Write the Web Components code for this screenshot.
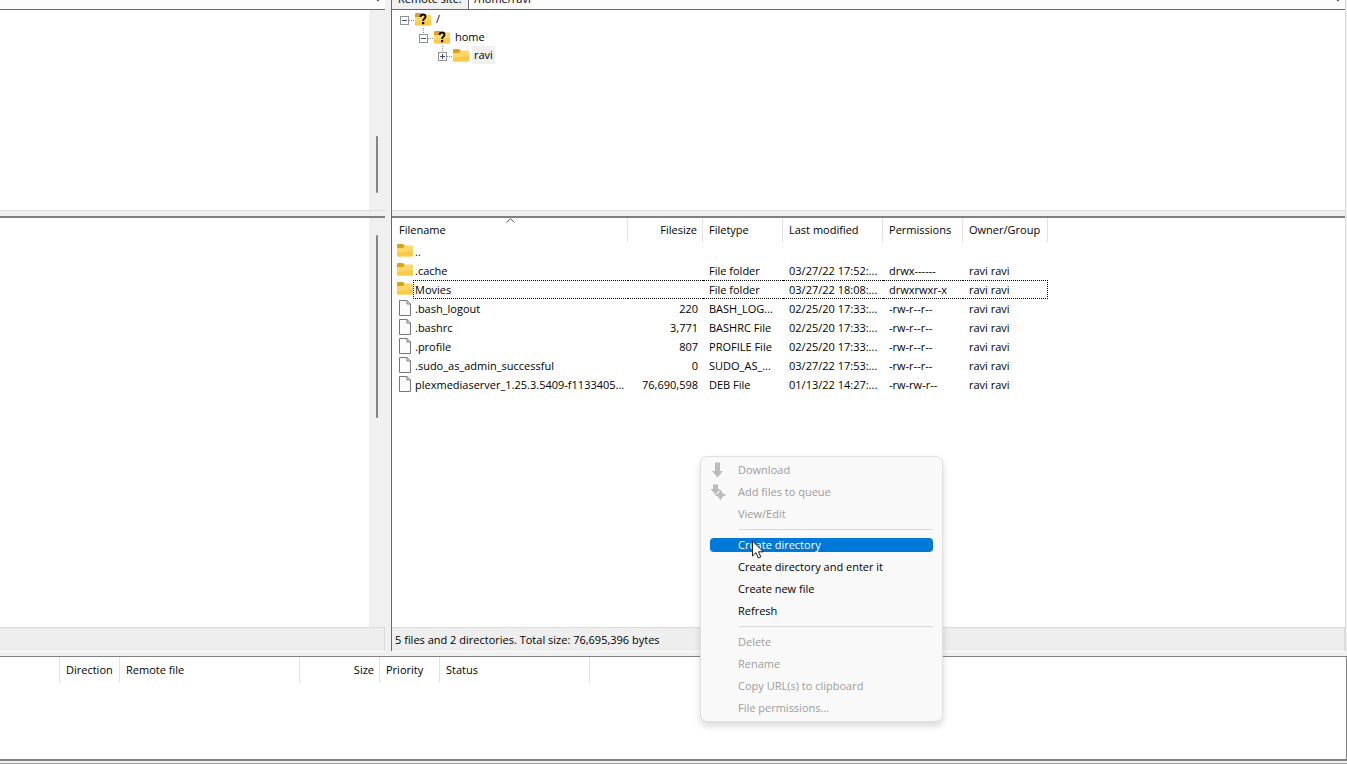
<!DOCTYPE html>
<html lang="en">
<head>
<meta charset="utf-8">
<title>File transfer</title>
<style>
    html, body { height: 100%; }
    body {
        margin: 0;
        overflow: hidden;
        background: #f0f0f0;
        color: #000;
        font: 11px/16px "Open Sans", "Noto Sans", sans-serif;
    }
</style>
</head>
<body>
<ftp-window>
    <site-bar slot="local-bar"></site-bar>
    <scroll-pane slot="local-tree" start="126" size="57"></scroll-pane>
    <scroll-pane slot="local-list" start="17" size="183"></scroll-pane>
    <status-line slot="local-status"></status-line>

    <site-bar slot="remote-bar" caption="Remote site:" path="/home/ravi"></site-bar>
    <div slot="remote-tree">
        <tree-item level="0" icon="unknown" state="open">/</tree-item>
        <tree-item level="1" icon="unknown" state="open">home</tree-item>
        <tree-item level="2" icon="folder" state="closed" selected>ravi</tree-item>
    </div>
    <file-list slot="remote-list"></file-list>
    <status-line slot="remote-status">5 files and 2 directories. Total size: 76,695,396 bytes</status-line>

    <transfer-queue slot="queue"></transfer-queue>
</ftp-window>

<context-menu>
    <menu-item icon="download" disabled>Download</menu-item>
    <menu-item icon="queue" disabled>Add files to queue</menu-item>
    <menu-item disabled>View/Edit</menu-item>
    <menu-line></menu-line>
    <menu-item active>Create directory</menu-item>
    <menu-item>Create directory and enter it</menu-item>
    <menu-item>Create new file</menu-item>
    <menu-item>Refresh</menu-item>
    <menu-line></menu-line>
    <menu-item disabled>Delete</menu-item>
    <menu-item disabled>Rename</menu-item>
    <menu-item disabled>Copy URL(s) to clipboard</menu-item>
    <menu-item disabled>File permissions...</menu-item>
</context-menu>
<mouse-pointer></mouse-pointer>

<script>
const folder = `
    <svg width="16" height="14" viewBox="0 0 16 14">
        <path d="M0 2Q0 1 1 1H6L8 3V6H0Z" fill="#dba21c"/>
        <path d="M0 5H6L8 2.500H15Q16 2.500 16 3.500V12.500Q16 13.500 15 13.500H1Q0 13.500 0 12.500Z" fill="#fdd767"/>
        <path d="M0 10L16 8V12.500Q16 13.500 15 13.500H1Q0 13.500 0 12.500Z" fill="#f9c948"/>
    </svg>`

const unknownFolder = folder.replace('</svg>', `
        <path d="M5.500 5Q5.500 2.500 8 2.500Q10.500 2.500 10.500 4.600Q10.500 6 9.200 6.800Q8.200 7.500 8.200 9" fill="none" stroke="#000" stroke-width="1.800"/>
        <rect x="7" y="10" width="2.200" height="2.200" fill="#000"/>
    </svg>`)

const page = `
    <svg width="12" height="16" viewBox="0 0 12 16">
        <path d="M.5.5H8L11.500 4V15.500H.5Z" fill="#fcfcfc" stroke="#777"/>
        <path d="M8 .5V4H11.500" fill="none" stroke="#777"/>
    </svg>`

const menuIcons = {
    download: `
        <svg width="16" height="16" viewBox="0 0 16 16">
            <path d="M5 .5H10V9H13L7.500 15.500L2 9H5Z" fill="#bcbcbc"/>
        </svg>`,
    queue: `
        <svg width="16" height="16" viewBox="0 0 16 16">
            <path d="M3 .5H8V5H10.500L5.500 10.500L.3 5H3Z" fill="#bcbcbc"/>
            <path d="M10.500 6L12 9.500L15.500 11L12 12.500L10.500 16L9 12.500L5.500 11L9 9.500Z" fill="#bcbcbc" stroke="#bcbcbc"/>
        </svg>`
}

class FtpWindow extends HTMLElement {
    constructor(){
        super();
        this.shadowdom = this.attachShadow({mode:'open'})
    }
    connectedCallback(){
        this.shadowdom.innerHTML = `
        <style>
        :host {
            display: flex;
            flex-direction: column;
            height: 100vh;
        }
        .sites {
            flex: 1;
            min-height: 0;
            display: grid;
            grid-template-columns: 385px minmax(0, 1fr);
            column-gap: 6px;
            padding-right: 1px;
        }
        .site {
            display: flex;
            flex-direction: column;
            min-height: 0;
        }
        .remote {
            border-left: 1px solid #696969;
            border-right: 1px solid #dcdcdc;
        }
        .tree, .list {
            display: flex;
            flex-direction: column;
            background: #fff;
        }
        .tree {
            height: 200px;
            border-top: 1px solid #696969;
            border-bottom: 1px solid #dcdcdc;
        }
        .list {
            flex: 1;
            min-height: 0;
            margin-top: 5px;
            border-top: 2px solid #808080;
        }
        .queue {
            height: 102px;
            margin-top: 5px;
            background: #fff;
            border: solid #808080;
            border-width: 1px 1px 2px 0;
        }
        .foot {
            height: 2px;
            border-bottom: 1px solid #a0a0a0;
        }
        </style>
        <div class="sites">
            <section class="site local">
                <slot name="local-bar"></slot>
                <div class="tree"><slot name="local-tree"></slot></div>
                <div class="list"><slot name="local-list"></slot></div>
                <slot name="local-status"></slot>
            </section>
            <section class="site remote">
                <slot name="remote-bar"></slot>
                <div class="tree"><slot name="remote-tree"></slot></div>
                <div class="list"><slot name="remote-list"></slot></div>
                <slot name="remote-status"></slot>
            </section>
        </div>
        <div class="queue"><slot name="queue"></slot></div>
        <div class="foot"></div>
        `
    }
}
window.customElements.define("ftp-window", FtpWindow)

// scrolled half out of the window, so only its lower edge shows
class SiteBar extends HTMLElement {
    constructor(){
        super();
        this.shadowdom = this.attachShadow({mode:'open'})
    }
    get caption(){
        return this.getAttribute('caption')
    }
    get path(){
        return this.getAttribute('path') || ''
    }
    connectedCallback(){
        const label = this.caption ? `<label for="path">${this.caption}</label>` : ''
        this.shadowdom.innerHTML = `
        <style>
        :host {
            display: flex;
            align-items: flex-end;
            height: 9px;
            overflow: hidden;
            background: #fcfcfc;
        }
        label {
            box-sizing: border-box;
            width: 77px;
            height: 20px;
            padding: 0 6px;
            background: #f0f0f0;
            border-right: 1px solid #696969;
            line-height: 20px;
            white-space: nowrap;
        }
        input {
            box-sizing: border-box;
            flex: 1;
            min-width: 0;
            height: 20px;
            padding: 0 5px;
            border: 0;
            outline: 0;
            background: none;
            color: inherit;
            font: inherit;
            line-height: 20px;
        }
        svg {
            flex: none;
            width: 8px;
            height: 9px;
            margin-right: 3px;
        }
        </style>
        ${label}
        <input id="path" type="text" aria-label="Path" value="${this.path}">
        <svg viewBox="0 0 8 9"><path d="M1 -3L4 0L7 -3" fill="none" stroke="#444" stroke-width="2"/></svg>
        `
    }
}
window.customElements.define("site-bar", SiteBar)

class ScrollPane extends HTMLElement {
    constructor(){
        super();
        this.shadowdom = this.attachShadow({mode:'open'})
    }
    connectedCallback(){
        this.shadowdom.innerHTML = `
        <style>
        :host {
            display: flex;
            justify-content: flex-end;
            flex: 1;
            min-height: 0;
        }
        .track {
            width: 16px;
            background: #f0f0f0;
        }
        .thumb {
            width: 2px;
            height: ${this.getAttribute('size')}px;
            margin: ${this.getAttribute('start')}px 0 0 7px;
            background: #858585;
            border-radius: 1px;
        }
        </style>
        <div class="track"><div class="thumb"></div></div>
        `
    }
}
window.customElements.define("scroll-pane", ScrollPane)

class StatusLine extends HTMLElement {
    constructor(){
        super();
        this.shadowdom = this.attachShadow({mode:'open'})
    }
    connectedCallback(){
        this.shadowdom.innerHTML = `
        <style>
        :host {
            display: block;
            height: 16px;
            padding: 4px 3px 3px;
            background: #eee;
            border: solid #dadada;
            border-width: 1px 1px 0 0;
            box-shadow: 0 1px #fff;
            white-space: nowrap;
        }
        </style>
        <slot></slot>
        `
    }
}
window.customElements.define("status-line", StatusLine)

class TreeItem extends HTMLElement {
    constructor(){
        super();
        this.shadowdom = this.attachShadow({mode:'open'})
    }
    connectedCallback(){
        const level = Number(this.getAttribute('level'))
        const icon = this.getAttribute('icon') == 'unknown' ? unknownFolder : folder
        const plus = this.getAttribute('state') == 'closed' ? 'M5.500 8V13' : ''
        const up = level > 0 ? 'M5.500 0V6' : ''
        this.shadowdom.innerHTML = `
        <style>
        :host {
            display: flex;
            align-items: center;
            height: 18px;
            padding-left: ${7 + level * 19}px;
        }
        .label {
            margin-left: 3px;
            padding: 0 2px;
            line-height: 18px;
        }
        :host([selected]) .label {
            background: #f0f0f0;
        }
        </style>
        <svg width="16" height="18" viewBox="0 0 16 18" fill="none">
            <path d="M10 10.500H16${up}" stroke="#888" stroke-dasharray="1 1"/>
            <rect x="1.500" y="6.500" width="8" height="8" fill="#fff" stroke="#919191"/>
            <path d="M3 10.500H8${plus}" stroke="#3c4f8c"/>
        </svg>
        ${icon}
        <span class="label"><slot></slot></span>
        `
    }
}
window.customElements.define("tree-item", TreeItem)

class FileList extends HTMLElement {
    constructor(){
        super();
        this.shadowdom = this.attachShadow({mode:'open'})
        this.files = [
            ['..', '', '', '', '', ''],
            ['.cache', '', 'File folder', '03/27/22 17:52:...', 'drwx------', 'ravi ravi'],
            ['Movies', '', 'File folder', '03/27/22 18:08:...', 'drwxrwxr-x', 'ravi ravi'],
            ['.bash_logout', '220', 'BASH_LOG...', '02/25/20 17:33:...', '-rw-r--r--', 'ravi ravi'],
            ['.bashrc', '3,771', 'BASHRC File', '02/25/20 17:33:...', '-rw-r--r--', 'ravi ravi'],
            ['.profile', '807', 'PROFILE File', '02/25/20 17:33:...', '-rw-r--r--', 'ravi ravi'],
            ['.sudo_as_admin_successful', '0', 'SUDO_AS_...', '03/27/22 17:53:...', '-rw-r--r--', 'ravi ravi'],
            ['plexmediaserver_1.25.3.5409-f1133405...', '76,690,598', 'DEB File', '01/13/22 14:27:...', '-rw-rw-r--', 'ravi ravi']
        ]
    }
    connectedCallback(){
        const rows = this.files.map((f, i) => `
            <tr class="${f[0] == 'Movies' ? 'focused' : ''}">
                <td class="icon">${i < 3 ? folder : page}</td>
                ${f.map(v => `<td>${v}</td>`).join('')}
            </tr>`).join('')
        this.shadowdom.innerHTML = `
        <style>
        :host {
            display: block;
        }
        table {
            width: 656px;
            table-layout: fixed;
            border-collapse: separate;
            border-spacing: 0;
        }
        th, td {
            box-sizing: border-box;
            padding: 0 0 0 6px;
            text-align: left;
            font-weight: normal;
            white-space: nowrap;
        }
        th {
            height: 24px;
            border-right: 1px solid #e2e2e2;
        }
        td {
            height: 19px;
            border: 0 solid transparent;
            border-width: 1px 0;
            line-height: 17px;
        }
        th:nth-child(2), td:nth-child(3) {
            padding: 0 5px 0 0;
            text-align: right;
        }
        td.icon {
            padding: 1px 0 0 5px;
            border: 0;
            vertical-align: top;
        }
        td:nth-child(2) {
            padding-left: 1px;
            border-left-width: 1px;
        }
        td:last-child {
            border-right-width: 1px;
        }
        .focused td:not(.icon) {
            border-style: dotted;
            border-color: #000;
        }
        .focused td:not(:nth-child(2)) {
            border-left: 0;
        }
        td svg {
            display: block;
        }
        td svg[width="12"] {
            margin-left: 2px;
        }
        th.name {
            position: relative;
            padding-left: 7px;
        }
        .sort {
            position: absolute;
            top: 0;
            left: 50%;
            margin-left: -4px;
        }
        </style>
        <table>
            <colgroup>
                <col style="width:21px"><col style="width:215px"><col style="width:75px">
                <col style="width:80px"><col style="width:100px"><col style="width:80px"><col style="width:85px">
            </colgroup>
            <thead>
                <tr>
                    <th class="name" colspan="2">Filename
                        <svg class="sort" width="9" height="5" viewBox="0 0 9 5"><path d="M.5 4.500L4.500 .8L8.500 4.500" fill="none" stroke="#555"/></svg>
                    </th>
                    <th>Filesize</th>
                    <th>Filetype</th>
                    <th>Last modified</th>
                    <th>Permissions</th>
                    <th>Owner/Group</th>
                </tr>
            </thead>
            <tbody>${rows}</tbody>
        </table>
        `
    }
}
window.customElements.define("file-list", FileList)

class TransferQueue extends HTMLElement {
    constructor(){
        super();
        this.shadowdom = this.attachShadow({mode:'open'})
    }
    connectedCallback(){
        this.shadowdom.innerHTML = `
        <style>
        :host {
            display: block;
        }
        table {
            width: 590px;
            table-layout: fixed;
            border-collapse: separate;
            border-spacing: 0;
        }
        th {
            box-sizing: border-box;
            height: 26px;
            padding: 0 0 0 6px;
            border-right: 1px solid #e2e2e2;
            font-weight: normal;
            text-align: left;
            white-space: nowrap;
        }
        .size {
            padding: 0 5px 0 0;
            text-align: right;
        }
        </style>
        <table>
            <colgroup>
                <col style="width:60px"><col style="width:60px"><col style="width:180px">
                <col style="width:80px"><col style="width:60px"><col style="width:150px">
            </colgroup>
            <thead>
                <tr><th></th><th>Direction</th><th>Remote file</th><th class="size">Size</th><th>Priority</th><th>Status</th></tr>
            </thead>
        </table>
        `
    }
}
window.customElements.define("transfer-queue", TransferQueue)

class ContextMenu extends HTMLElement {
    constructor(){
        super();
        this.shadowdom = this.attachShadow({mode:'open'})
    }
    connectedCallback(){
        this.shadowdom.innerHTML = `
        <style>
        :host {
            position: absolute;
            left: 700px;
            top: 456px;
            box-sizing: border-box;
            width: 243px;
            padding: 2px 9px;
            background: #f9f9f9;
            border: 1px solid #e0e0e0;
            border-radius: 7px;
            box-shadow: 0 4px 7px rgba(0, 0, 0, .15);
        }
        </style>
        <div role="menu"><slot></slot></div>
        `
    }
}
window.customElements.define("context-menu", ContextMenu)

class MenuItem extends HTMLElement {
    constructor(){
        super();
        this.shadowdom = this.attachShadow({mode:'open'})
    }
    connectedCallback(){
        this.shadowdom.innerHTML = `
        <style>
        :host {
            display: block;
            padding: 4px 0;
        }
        button {
            display: flex;
            align-items: center;
            width: 100%;
            height: 14px;
            padding: 0;
            border: 0;
            border-radius: 4px;
            background: none;
            color: #000;
            font: inherit;
            line-height: 14px;
            white-space: nowrap;
        }
        button:disabled {
            color: #9c9c9c;
        }
        :host([active]) button {
            background: #0078d7;
            color: #fff;
        }
        .icon {
            flex: none;
            display: flex;
            width: 28px;
        }
        </style>
        <button role="menuitem" ${this.hasAttribute('disabled') ? 'disabled' : ''}>
            <span class="icon">${menuIcons[this.getAttribute('icon')] || ''}</span>
            <slot></slot>
        </button>
        `
    }
}
window.customElements.define("menu-item", MenuItem)

class MenuLine extends HTMLElement {
    constructor(){
        super();
        this.shadowdom = this.attachShadow({mode:'open'})
    }
    connectedCallback(){
        this.shadowdom.innerHTML = `
        <style>
        :host {
            display: block;
            height: 1px;
            margin: 4px 0 4px 29px;
            background: #d7d7d7;
        }
        </style>
        `
    }
}
window.customElements.define("menu-line", MenuLine)

class MousePointer extends HTMLElement {
    constructor(){
        super();
        this.shadowdom = this.attachShadow({mode:'open'})
    }
    connectedCallback(){
        this.shadowdom.innerHTML = `
        <style>
        :host {
            position: absolute;
            left: 752px;
            top: 540px;
            pointer-events: none;
        }
        svg {
            display: block;
        }
        </style>
        <svg width="12" height="19" viewBox="0 0 12 19">
            <path d="M.5 1V16L4 12.700L6.300 18L8.800 17L6.500 11.800H11.300Z" fill="#fff" stroke="#222"/>
        </svg>
        `
    }
}
window.customElements.define("mouse-pointer", MousePointer)
</script>
</body>
</html>
